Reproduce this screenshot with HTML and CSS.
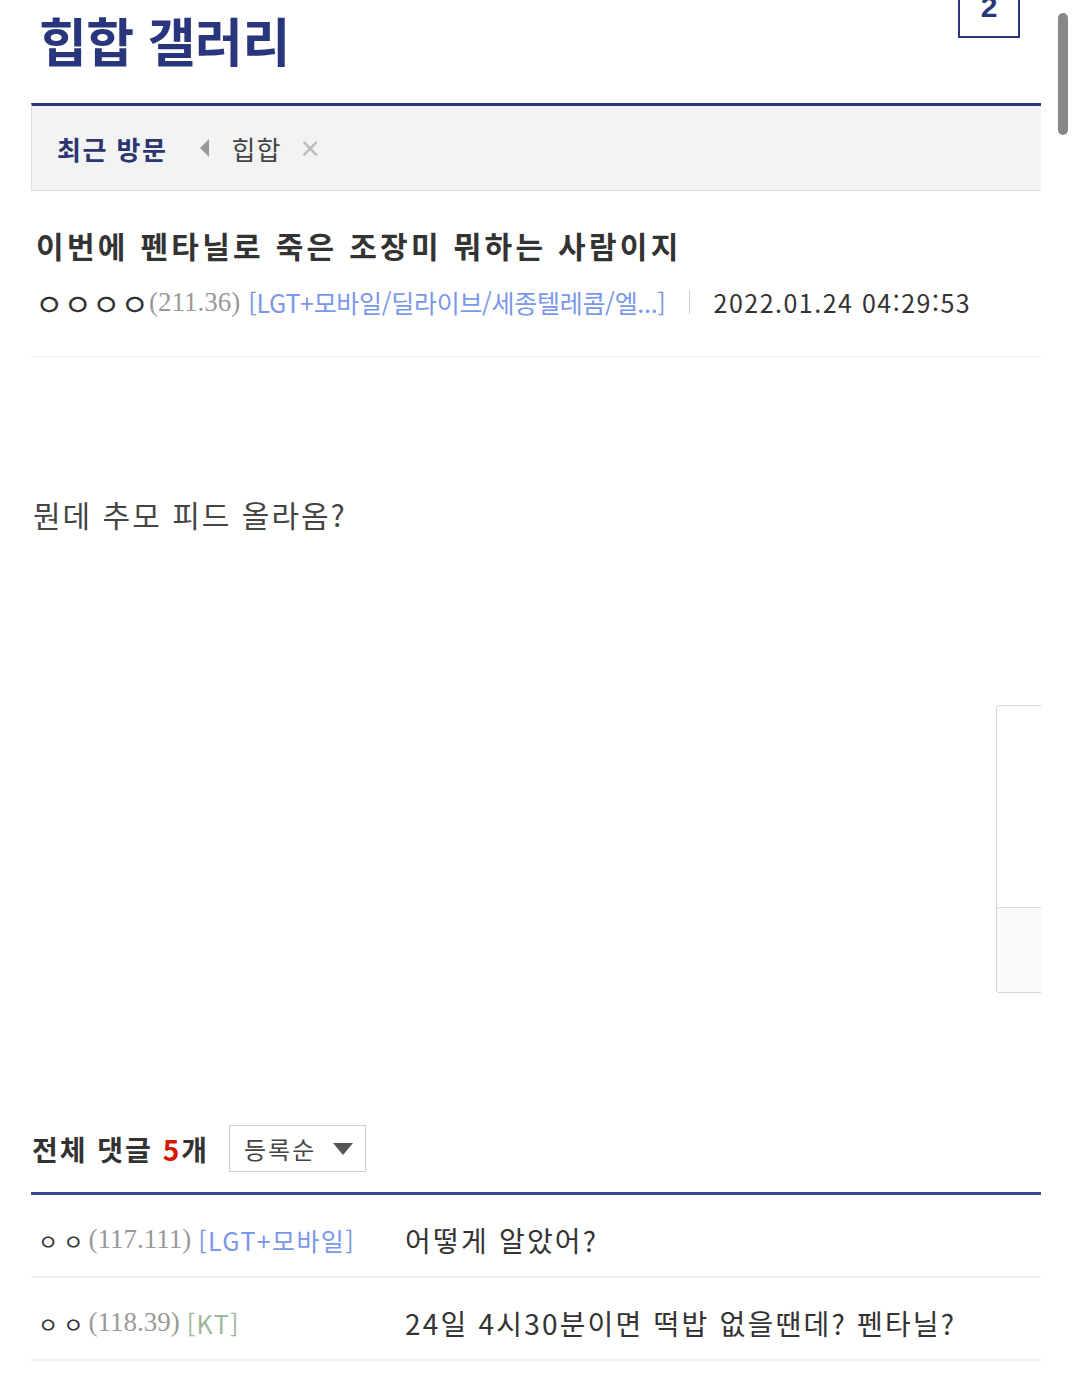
FILE: index.html
```html
<!DOCTYPE html>
<html lang="ko">
<head>
    <meta charset="UTF-8">
    <meta name="viewport" content="width=device-width, initial-scale=1.0">
    <title>힙합 갤러리</title>
    <link rel="stylesheet" href="styles.css">
</head>
<body>
    <div class="page">
        <header class="gall-head">
            <h1 class="gall-title">힙합 갤러리</h1>
            <span class="page-num">2</span>
        </header>

        <div class="visit-bar">
            <strong class="visit-label">최근 방문</strong>
            <span class="visit-prev"></span>
            <span class="visit-item">힙합</span>
            <span class="visit-close">×</span>
        </div>

        <div class="post-head">
            <h2 class="post-title">이번에 펜타닐로 죽은 조장미 뭐하는 사람이지</h2>
            <div class="post-meta">
                <span class="nick">ㅇㅇㅇㅇ</span><span class="ip">(211.36)</span>
                <span class="telecom">[LGT+모바일/딜라이브/세종텔레콤/엘...]</span>
                <span class="divider"></span>
                <span class="date">2022.01.24 04:29:53</span>
            </div>
        </div>

        <div class="post-body">
            <p class="post-text">뭔데 추모 피드 올라옴?</p>
            <div class="side-box">
                <div class="side-top"></div>
                <div class="side-bottom"></div>
            </div>
        </div>

        <div class="cmt-head">
            <h3 class="cmt-count">전체 댓글 <em>5</em>개</h3>
            <div class="sort-select">
                <span>등록순</span>
                <span class="sort-arrow"></span>
            </div>
        </div>

        <ul class="cmt-list">
            <li class="cmt-row">
                <div class="cmt-writer">
                    <span class="nick small">ㅇㅇ</span><span class="ip">(117.111)</span>
                    <span class="telecom">[LGT+모바일]</span>
                </div>
                <p class="cmt-text">어떻게 알았어?</p>
            </li>
            <li class="cmt-row">
                <div class="cmt-writer">
                    <span class="nick small">ㅇㅇ</span><span class="ip">(118.39)</span>
                    <span class="telecom kt">[KT]</span>
                </div>
                <p class="cmt-text">24일 4시30분이면 떡밥 없을땐데? 펜타닐?</p>
            </li>
        </ul>
    </div>

    <div class="scroll-thumb"></div>
</body>
</html>
```

FILE: styles.css
```css
body {
    margin: 0;
    background-color: #ffffff;
    font-family: "Noto Sans CJK KR", "Noto Sans", sans-serif;
    color: #333333;
    overflow: hidden;
}

.page {
    margin-left: 31px;
    width: 1010px;
    overflow: hidden;
}

/* gallery header */
.gall-head {
    display: flex;
    justify-content: space-between;
    align-items: flex-start;
    height: 103px;
}

.gall-title {
    margin: 8px 0 0 8px;
    font-size: 52px;
    line-height: 64px;
    font-weight: 700;
    letter-spacing: -0.5px;
    color: #29367c;
}

.page-num {
    margin: -24px 21px 0 0;
    width: 58px;
    height: 58px;
    border: 2px solid #29367c;
    font-family: "Liberation Sans", Arial, sans-serif;
    font-weight: 700;
    font-size: 30px;
    line-height: 58px;
    text-align: center;
    color: #29367c;
}

/* recent visit */
.visit-bar {
    display: flex;
    align-items: center;
    height: 84px;
    padding-left: 25px;
    border-top: 3px solid #29367c;
    border-left: 1px solid #dddddd;
    border-bottom: 1px solid #dddddd;
    background-color: #f3f3f3;
}

.visit-label {
    font-size: 26px;
    font-weight: 700;
    letter-spacing: 1.5px;
    color: #2b3570;
}

.visit-prev {
    margin-left: 33px;
    width: 0;
    height: 0;
    border-top: 9px solid transparent;
    border-bottom: 9px solid transparent;
    border-right: 9px solid #999999;
}

.visit-item {
    margin-left: 22px;
    font-size: 26px;
    letter-spacing: 1px;
    color: #444444;
}

.visit-close {
    margin-left: 18px;
    font-family: "DejaVu Sans", sans-serif;
    font-size: 26px;
    color: #bbbbbb;
}

/* post header */
.post-head {
    padding: 30px 0 34px;
    border-bottom: 1px solid #eeeeee;
}

.post-title {
    margin: 0 0 0 5px;
    font-size: 30px;
    line-height: 48px;
    font-weight: 700;
    letter-spacing: 3.3px;
    color: #333333;
}

.post-meta {
    display: flex;
    align-items: center;
    margin-top: 13px;
    padding-left: 4px;
    height: 40px;
}

.nick {
    font-size: 31px;
    letter-spacing: 0;
    color: #333333;
}

.nick.small {
    font-size: 22px;
    letter-spacing: 5px;
}

.ip {
    font-family: "Liberation Serif", "Times New Roman", serif;
    font-size: 27px;
    color: #999999;
}

.telecom {
    margin-left: 8px;
    font-size: 25px;
    letter-spacing: -0.3px;
    color: #7b97ea;
}

.cmt-writer .telecom {
    margin-left: 7px;
    letter-spacing: 1.4px;
}

.telecom.kt {
    color: #9db79c;
}

.divider {
    margin: 0 24px 0 23px;
    height: 24px;
    border-left: 1px solid #cccccc;
}

.date {
    font-size: 25px;
    letter-spacing: 1.5px;
    color: #333333;
}

/* post body */
.post-body {
    display: flex;
    flex-direction: column;
    height: 756px;
}

.post-text {
    margin: 133px 0 0 2px;
    font-size: 30px;
    line-height: 48px;
    letter-spacing: 2px;
    color: #444444;
}

.side-box {
    align-self: flex-end;
    display: flex;
    flex-direction: column;
    margin: 167px -60px 0 0;
    width: 103px;
    height: 286px;
    border: 1px solid #d6d6d6;
    border-radius: 3px;
}

.side-top {
    height: 201px;
    border-bottom: 1px solid #dddddd;
}

.side-bottom {
    flex-grow: 1;
    background-color: #fafafa;
}

/* comments */
.cmt-head {
    display: flex;
    align-items: center;
    gap: 20px;
    height: 71px;
    padding-bottom: 8px;
    border-bottom: 3px solid #3b4892;
}

.cmt-count {
    margin: 0 0 0 1px;
    font-size: 28px;
    font-weight: 700;
    letter-spacing: 2px;
    color: #333333;
}

.cmt-count em {
    font-style: normal;
    color: #d31900;
}

.sort-select {
    display: flex;
    align-items: center;
    justify-content: space-between;
    box-sizing: border-box;
    width: 137px;
    height: 47px;
    padding: 0 12px 0 14px;
    border: 1px solid #cccccc;
    font-size: 24px;
    letter-spacing: 2px;
    color: #444444;
}

.sort-arrow {
    width: 0;
    height: 0;
    border-left: 10px solid transparent;
    border-right: 10px solid transparent;
    border-top: 12px solid #555555;
}

.cmt-list {
    list-style: none;
    margin: 0;
    padding: 0;
}

.cmt-row {
    display: flex;
    align-items: center;
    height: 73px;
    padding-top: 8px;
    border-bottom: 2px solid #eeeeee;
}

.cmt-writer {
    display: flex;
    align-items: center;
    width: 367px;
    padding-left: 7px;
}

.cmt-text {
    margin: 0;
    font-size: 28px;
    letter-spacing: 2.2px;
    color: #333333;
}

/* overlay scrollbar */
.scroll-thumb {
    position: fixed;
    top: 13px;
    right: 9px;
    width: 10px;
    height: 122px;
    border-radius: 5px;
    background-color: #888888;
}
```
